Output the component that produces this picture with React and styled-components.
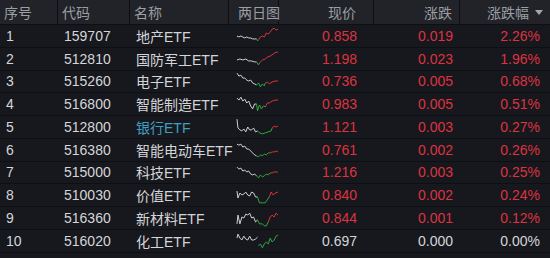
import styled, { createGlobalStyle } from "styled-components";

const GlobalStyle = createGlobalStyle`
  html, body {
    margin: 0;
    padding: 0;
    background: #17181d;
  }
  body {
    font-family: "Liberation Sans", "Noto Sans CJK SC", sans-serif;
    font-size: 14px;
  }
`;

const COLS = "58px 72px 99px 50px 95px 86px 1fr";

const RED = "#dd3340";
const GREEN = "#2eaa3f";
const WHITE = "#d4d5d8";

// each line: [prev day (white), segments of the second day with colour]
const rows = [
  {
    no: 1, code: "159707", name: "地产ETF", price: "0.858", chg: "0.019", pct: "2.26%", dir: "up",
    line: [
      ["w", [[0, 9], [2, 10], [4, 9], [6, 10], [8, 11], [10, 10], [12, 11], [14, 11], [16, 12], [18, 12], [20, 12]]],
      ["g", [[20, 12], [21, 14], [22, 13]]],
      ["r", [[22, 13], [24, 10], [26, 9], [28, 10], [30, 6], [32, 7], [34, 5], [36, 2], [38, 1], [40, 3], [42, 2]]],
    ],
  },
  {
    no: 2, code: "512810", name: "国防军工ETF", price: "1.198", chg: "0.023", pct: "1.96%", dir: "up",
    line: [
      ["w", [[0, 10], [3, 9], [6, 10], [9, 9], [12, 11], [15, 11], [18, 12], [20, 12]]],
      ["g", [[20, 12], [22, 15], [23, 13]]],
      ["r", [[23, 13], [26, 10], [29, 9], [31, 7], [34, 6], [37, 4], [40, 2], [42, 2]]],
    ],
  },
  {
    no: 3, code: "515260", name: "电子ETF", price: "0.736", chg: "0.005", pct: "0.68%", dir: "up",
    line: [
      ["w", [[0, 1], [2, 4], [4, 3], [6, 6], [8, 6], [10, 8], [12, 9], [14, 8], [16, 11], [18, 12], [20, 13]]],
      ["g", [[20, 13], [22, 11], [24, 15], [26, 12], [28, 14], [29, 11]]],
      ["r", [[29, 11], [31, 10], [33, 12], [36, 10], [39, 9], [42, 9]]],
    ],
  },
  {
    no: 4, code: "516800", name: "智能制造ETF", price: "0.983", chg: "0.005", pct: "0.51%", dir: "up",
    line: [
      ["w", [[0, 3], [2, 5], [4, 2], [6, 6], [8, 4], [10, 8], [12, 6], [14, 11], [16, 14], [18, 9], [20, 9]]],
      ["g", [[20, 9], [21, 16], [23, 10], [25, 14], [27, 11], [29, 12]]],
      ["r", [[29, 12], [31, 8], [33, 8], [36, 6], [39, 5], [42, 5]]],
    ],
  },
  {
    no: 5, code: "512800", name: "银行ETF", price: "1.121", chg: "0.003", pct: "0.27%", dir: "up", hl: true,
    line: [
      ["w", [[0, 1], [1, 10], [3, 12], [5, 13], [7, 11], [9, 14], [11, 9], [13, 12], [15, 12], [17, 10], [19, 14], [21, 13]]],
      ["g", [[21, 13], [23, 15], [26, 16], [29, 15], [32, 14], [35, 13], [36, 10]]],
      ["r", [[36, 10], [38, 8], [40, 9], [42, 8]]],
    ],
  },
  {
    no: 6, code: "516380", name: "智能电动车ETF", price: "0.761", chg: "0.002", pct: "0.26%", dir: "up",
    line: [
      ["w", [[0, 3], [2, 4], [4, 3], [6, 6], [8, 5], [10, 8], [12, 8], [14, 10], [16, 12], [18, 14], [20, 15]]],
      ["g", [[20, 15], [22, 16], [24, 14], [26, 15], [28, 13], [30, 14], [32, 12], [34, 12]]],
      ["r", [[34, 12], [36, 11], [38, 11], [40, 10], [42, 11]]],
    ],
  },
  {
    no: 7, code: "515000", name: "科技ETF", price: "1.216", chg: "0.003", pct: "0.25%", dir: "up",
    line: [
      ["w", [[0, 4], [2, 6], [4, 5], [6, 8], [8, 7], [10, 9], [12, 8], [14, 11], [16, 12], [18, 11], [20, 13]]],
      ["g", [[20, 13], [22, 15], [24, 12], [26, 14], [28, 13], [30, 11], [32, 12], [34, 10]]],
      ["r", [[34, 10], [36, 10], [38, 9], [40, 9], [42, 9]]],
    ],
  },
  {
    no: 8, code: "510030", name: "价值ETF", price: "0.840", chg: "0.002", pct: "0.24%", dir: "up",
    line: [
      ["w", [[0, 5], [1, 12], [3, 7], [5, 9], [7, 8], [9, 6], [11, 9], [13, 10], [15, 6], [17, 7], [19, 11], [21, 11]]],
      ["g", [[21, 11], [23, 17], [26, 17], [29, 17], [31, 14], [33, 11]]],
      ["r", [[33, 11], [35, 6], [37, 9], [39, 7], [42, 6]]],
    ],
  },
  {
    no: 9, code: "516360", name: "新材料ETF", price: "0.844", chg: "0.001", pct: "0.12%", dir: "up",
    line: [
      ["w", [[0, 15], [1, 6], [3, 15], [5, 8], [7, 9], [9, 5], [11, 6], [13, 4], [15, 9], [17, 8], [19, 13], [21, 11]]],
      ["g", [[21, 11], [23, 15], [26, 15], [28, 17], [30, 17], [32, 13]]],
      ["r", [[32, 13], [34, 8], [36, 6], [38, 8], [40, 4], [42, 6]]],
    ],
  },
  {
    no: 10, code: "516020", name: "化工ETF", price: "0.697", chg: "0.000", pct: "0.00%", dir: "flat",
    line: [
      ["w", [[0, 6], [1, 2], [3, 6], [5, 8], [7, 4], [9, 7], [11, 8], [13, 4], [15, 8], [17, 8], [19, 7], [21, 5]]],
      ["g", [[22, 14], [24, 12], [26, 16], [28, 12], [30, 10], [32, 12], [34, 6], [36, 10], [38, 8], [40, 4], [42, 3]]],
    ],
  },
];

const strokeOf = { w: WHITE, g: GREEN, r: RED };

const Spark = ({ line }) => (
  <svg width="44" height="18" viewBox="0 0 44 18">
    {line.map(([c, pts], i) => (
      <polyline
        key={i}
        points={pts.map(([x, y]) => `${x + 1},${y}`).join(" ")}
        fill="none"
        stroke={strokeOf[c]}
        strokeWidth="1"
        strokeLinejoin="round"
      />
    ))}
  </svg>
);

const App = () => (
  <Table>
    <GlobalStyle />
    <HeadRow>
      <HeadCell>序号</HeadCell>
      <HeadCell>代码</HeadCell>
      <HeadCell>名称</HeadCell>
      <HeadCell $pl={9}>两日图</HeadCell>
      <HeadCell $right $pr={17}>现价</HeadCell>
      <HeadCell $right $pr={7}>涨跌</HeadCell>
      <HeadCell $right $pr={7} $last>
        涨跌幅<SortArrow />
      </HeadCell>
    </HeadRow>
    {rows.map((r) => (
      <Row key={r.no}>
        <Cell>{r.no}</Cell>
        <Cell>{r.code}</Cell>
        <Cell $tone={r.hl ? "blue" : "plain"}>{r.name}</Cell>
        <ChartCell>
          <Spark line={r.line} />
        </ChartCell>
        <Cell $right $pr={17} $tone={r.dir}>{r.price}</Cell>
        <Cell $right $pr={7} $tone={r.dir}>{r.chg}</Cell>
        <Cell $right $pr={10} $tone={r.dir}>{r.pct}</Cell>
      </Row>
    ))}
  </Table>
);

const toneColor = {
  up: RED,
  down: GREEN,
  flat: WHITE,
  plain: WHITE,
  blue: "#3f9fc2",
};

const Table = styled.div`
  width: 550px;
  height: 258px;
  background: #17181d;
  overflow: hidden;
`;

const HeadRow = styled.div`
  display: grid;
  grid-template-columns: ${COLS};
  height: 25px;
  background: #212328;
  border-bottom: 1px solid #0e0f12;
  box-sizing: border-box;
`;

const HeadCell = styled.div`
  display: flex;
  align-items: center;
  justify-content: ${(p) => (p.$right ? "flex-end" : "flex-start")};
  padding: 0 ${(p) => p.$pr ?? 0}px 0 ${(p) => p.$pl ?? 4}px;
  color: #9b9ea4;
  border-right: ${(p) => (p.$last ? "none" : "1px solid #0e0f12")};
  white-space: nowrap;
`;

const SortArrow = styled.span`
  width: 0;
  height: 0;
  margin-left: 6px;
  border-left: 4px solid transparent;
  border-right: 4px solid transparent;
  border-top: 5px solid #a4a7ad;
`;

const Row = styled.div`
  display: grid;
  grid-template-columns: ${COLS};
  height: 22.75px;
  border-bottom: 1px solid #0e0f12;
  box-sizing: border-box;
`;

const Cell = styled.div`
  display: flex;
  align-items: center;
  justify-content: ${(p) => (p.$right ? "flex-end" : "flex-start")};
  padding: 0 ${(p) => p.$pr ?? 0}px 0 6px;
  color: ${(p) => toneColor[p.$tone || "plain"]};
  white-space: nowrap;
`;

const ChartCell = styled.div`
  display: flex;
  align-items: center;
  padding-left: 7px;
`;

export default App;
